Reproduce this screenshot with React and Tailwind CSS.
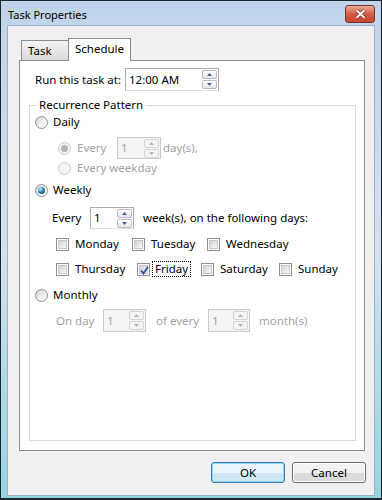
const Radio = ({ checked, disabled }) => (
    <span
        className={`flex items-center justify-center w-[13px] h-[13px] shrink-0 rounded-full border ${
            disabled
                ? "border-[#cdcdcd] bg-[#f4f4f4]"
                : "border-[#8e8f8f] bg-gradient-to-br from-[#d2d2d2] via-[#ececec] to-white"
        }`}
    >
        {checked && (
            <span
                className={`w-[7px] h-[7px] rounded-full ${
                    disabled
                        ? "bg-[#b4b4b4]"
                        : "bg-[radial-gradient(circle_at_35%_30%,#b9eefc,#2a7ba8_50%,#0b3a5c)]"
                }`}
            />
        )}
    </span>
);

const Check = ({ checked }) => (
    <span className="relative flex items-center justify-center w-[13px] h-[13px] shrink-0 border border-[#8e8f8f] bg-white">
        <span className="w-[9px] h-[9px] border border-[#c4c8cd] bg-gradient-to-br from-[#cfd2d7] to-[#f9f9f9]" />
        {checked && (
            <svg className="absolute left-[1px] top-[1px]" width="11" height="11" viewBox="0 0 11 11">
                <path d="M2.2 5.6 L4.4 8.4 L9 1.8" fill="none" stroke="#2f4f9a" strokeWidth="1.8" />
            </svg>
        )}
    </span>
);

const SpinBtn = ({ up, disabled }) => (
    <span
        className={`flex items-center justify-center w-[15px] h-[9px] rounded-[2px] border ${
            disabled
                ? "border-[#d4d4d4] bg-[#f4f4f4]"
                : "border-[#b9bdc3] bg-gradient-to-b from-white to-[#e4e6e9]"
        }`}
    >
        <svg width="5" height="3" viewBox="0 0 5 3">
            <path d={up ? "M0 3 L2.5 0 L5 3 Z" : "M0 0 L5 0 L2.5 3 Z"} fill={disabled ? "#b5b5b5" : "#4c5f80"} />
        </svg>
    </span>
);

const SpinBox = ({ value, size, disabled }) => (
    <div
        className={`flex items-center justify-between border pl-[3px] pr-[1px] ${size} ${
            disabled
                ? "border-[#cbcbcb] bg-[#f4f4f4] text-[#a3a3a3]"
                : "border-[#abadb3] border-b-[#dbdfe6] bg-white text-black"
        }`}
    >
        <span>{value}</span>
        <span className="flex flex-col gap-px">
            <SpinBtn up disabled={disabled} />
            <SpinBtn disabled={disabled} />
        </span>
    </div>
);

const Day = ({ label, cell, checked, focus }) => (
    <div className={`flex items-center ${cell}`}>
        <Check checked={checked} />
        {focus ? (
            <span className="ml-[2px] flex items-center h-[16px] px-[2px] border border-dotted border-black">
                {label}
            </span>
        ) : (
            <span className="ml-[6px]">{label}</span>
        )}
    </div>
);

const App = () => {
    return (
        <div className="w-[382px] h-[500px] border border-b-2 border-[#1b2631] bg-gradient-to-b from-[#bfd3ea] via-[#d3e2f2] to-[#93d4df] font-['Noto_Sans',sans-serif] text-[11.5px] leading-[16px] text-black">
            {/* Title bar */}
            <div className="flex justify-between items-start h-[24px]">
                <span className="mt-[6px] pl-[7px] text-[11px]">Task Properties</span>
                <div className="mt-[4px] mr-[6px] flex items-center justify-center w-[30px] h-[18px] rounded-[3px] border border-[#7b3227] bg-gradient-to-b from-[#e7ab9c] via-[#d25a43] to-[#c4482f]">
                    <svg width="11" height="10" viewBox="0 0 11 10">
                        <path d="M1.5 1.2 L9.5 8.8 M9.5 1.2 L1.5 8.8" stroke="#6e2418" strokeWidth="3.4" />
                        <path d="M1.5 1.2 L9.5 8.8 M9.5 1.2 L1.5 8.8" stroke="#ffffff" strokeWidth="2" />
                    </svg>
                </div>
            </div>

            {/* Client area */}
            <div className="mx-[6px] h-[471px] border border-[#9cb0c5] bg-[#f0f0f0] pt-[12px] pl-[11px]">
                {/* Tabs */}
                <div className="flex items-end h-[22px]">
                    <div className="ml-[2px] w-[47px] h-[20px] border border-r-0 border-b-0 border-[#898c95] bg-gradient-to-b from-[#f4f4f4] to-[#dadada] pl-[6px] pt-[2px]">
                        Task
                    </div>
                    <div className="relative z-10 -mb-px w-[63px] h-[23px] border border-b-0 border-[#898c95] bg-white pl-[6px] pt-[2px]">
                        Schedule
                    </div>
                </div>

                {/* Tab panel */}
                <div className="w-[346px] h-[391px] border border-[#898c95] bg-white">
                    <div className="mt-[7px] pl-[15px] flex items-center">
                        <span className="w-[90px]">Run this task at:</span>
                        <SpinBox value="12:00 AM" size="w-[94px] h-[23px]" />
                    </div>

                    <fieldset className="mt-[6px] ml-[9px] w-[327px] h-[344px] border border-[#d5dbe1]">
                        <legend className="ml-[6px] px-[3px]">Recurrence Pattern</legend>

                        {/* Daily */}
                        <div className="h-[18px] pl-[5px] flex items-center gap-[5px]">
                            <Radio />
                            <span>Daily</span>
                        </div>
                        <div className="mt-[6px] h-[22px] pl-[28px] flex items-center text-[#a3a3a3]">
                            <Radio checked disabled />
                            <span className="ml-[6px] w-[40px]">Every</span>
                            <SpinBox value="1" size="w-[44px] h-[22px]" disabled />
                            <span className="ml-[2px]">day(s),</span>
                        </div>
                        <div className="h-[18px] pl-[28px] flex items-center text-[#a3a3a3]">
                            <Radio disabled />
                            <span className="ml-[6px]">Every weekday</span>
                        </div>

                        {/* Weekly */}
                        <div className="mt-[4px] h-[18px] pl-[5px] flex items-center gap-[5px]">
                            <Radio checked />
                            <span>Weekly</span>
                        </div>
                        <div className="mt-[8px] h-[22px] pl-[22px] flex items-center">
                            <span className="w-[38px]">Every</span>
                            <SpinBox value="1" size="w-[44px] h-[22px]" />
                            <span className="ml-[9px]">week(s), on the following days:</span>
                        </div>
                        <div className="mt-[6px] h-[18px] pl-[26px] flex items-center">
                            <Day label="Monday" cell="w-[76px]" />
                            <Day label="Tuesday" cell="w-[75px]" />
                            <Day label="Wednesday" />
                        </div>
                        <div className="mt-[7px] h-[18px] pl-[26px] flex items-center">
                            <Day label="Thursday" cell="w-[81px]" />
                            <Day label="Friday" cell="w-[64px]" checked focus />
                            <Day label="Saturday" cell="w-[78px]" />
                            <Day label="Sunday" />
                        </div>

                        {/* Monthly */}
                        <div className="mt-[8px] h-[18px] pl-[5px] flex items-center gap-[5px]">
                            <Radio />
                            <span>Monthly</span>
                        </div>
                        <div className="mt-[5px] h-[23px] pl-[26px] flex items-center text-[#a3a3a3]">
                            <span className="w-[47px]">On day</span>
                            <SpinBox value="1" size="w-[43px] h-[23px]" disabled />
                            <span className="ml-[10px] w-[52px]">of every</span>
                            <SpinBox value="1" size="w-[42px] h-[23px]" disabled />
                            <span className="ml-[9px]">month(s)</span>
                        </div>
                    </fieldset>
                </div>

                {/* Buttons */}
                <div className="mt-[11px] pr-[8px] flex justify-end gap-[7px]">
                    <button className="w-[74px] h-[21px] rounded-[3px] border border-[#3c7fb1] bg-gradient-to-b from-[#eaf6fd] from-50% to-[#cfe8f6] to-50% shadow-[inset_0_0_0_1px_#8fd6f5]">
                        OK
                    </button>
                    <button className="w-[74px] h-[21px] rounded-[3px] border border-[#707070] bg-gradient-to-b from-[#f2f2f2] from-50% to-[#dcdcdc] to-50% shadow-[inset_0_0_0_1px_#fcfcfc]">
                        Cancel
                    </button>
                </div>
            </div>
        </div>
    );
};

export default App;
